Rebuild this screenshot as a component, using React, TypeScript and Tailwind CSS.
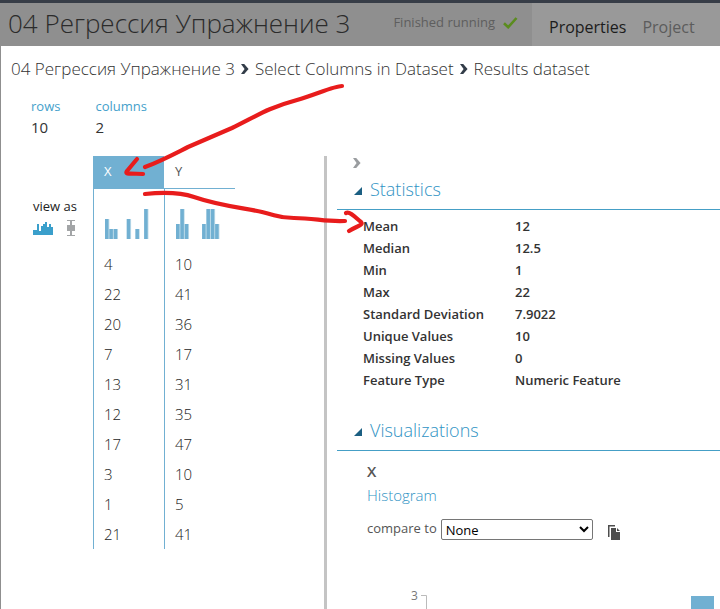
import type { ReactNode } from "react";

const rows: [number, number][] = [
  [4, 10],
  [22, 41],
  [20, 36],
  [7, 17],
  [13, 31],
  [12, 35],
  [17, 47],
  [3, 10],
  [1, 5],
  [21, 41],
];

const stats: [string, string][] = [
  ["Mean", "12"],
  ["Median", "12.5"],
  ["Min", "1"],
  ["Max", "22"],
  ["Standard Deviation", "7.9022"],
  ["Unique Values", "10"],
  ["Missing Values", "0"],
  ["Feature Type", "Numeric Feature"],
];

const xBins = [20, 10, 10, 0, 0, 20, 0, 10, 0, 30];
const yBins = [15, 30, 15, 0, 0, 0, 15, 30, 30, 15];

function Spark({ bins, label }: { bins: number[]; label: string }) {
  const pitch = 4.35;
  return (
    <svg width="44" height="30" viewBox="0 0 44 30" role="img" aria-label={label} className="block">
      {bins.map((h, i) =>
        h ? (
          <g key={i}>
            <rect x={i * pitch} y={30 - h} width={pitch} height={h} fill="#c3deeb" />
            <rect x={i * pitch} y={30 - h} width="3.5" height={h} fill="#71b0d2" />
          </g>
        ) : null
      )}
    </svg>
  );
}

function Chevron({ className }: { className: string }) {
  return (
    <svg width="8" height="10" viewBox="0 0 8 10" className={className} aria-hidden="true">
      <path d="M0 0h3.2L7.6 5 3.2 10H0l3.6-5z" fill="currentColor" />
    </svg>
  );
}

function Section({ title, children }: { title: string; children: ReactNode }) {
  return (
    <section>
      <h2 className="border-b border-[#459fc6] text-lg font-light text-[#2f93c4]">
        <button type="button" className="flex h-[39px] w-full items-center gap-2 pb-px pl-[17px]">
          <svg width="8" height="8" viewBox="0 0 8 8" aria-hidden="true" className="mt-1">
            <path d="M8 0v8H0z" fill="#1b5f82" />
          </svg>
          {title}
        </button>
      </h2>
      {children}
    </section>
  );
}

export default function App() {
  return (
    <div className="relative flex h-screen flex-col overflow-hidden bg-[#8f8f8f] font-['Open_Sans','Noto_Sans',sans-serif] text-[#333]">
      <header className="flex h-[46px] shrink-0 border-t-[3px] border-[#373d47]">
        <div className="flex min-w-0 flex-1 items-center justify-between pr-[14px] pb-1 pl-2">
          <h1 className="text-[26px] leading-8 font-light whitespace-nowrap text-[#2b2b2b]">04 Регрессия Упражнение 3</h1>
          <p className="flex items-center gap-2 text-[13px] whitespace-nowrap text-[#5e5e5e]">
            Finished running
            <svg width="15" height="12" viewBox="0 0 15 12" aria-hidden="true">
              <path d="M1 6.2l4.2 4L13.5 1" fill="none" stroke="#5b8c1e" strokeWidth="2.6" />
            </svg>
          </p>
        </div>
        <nav className="flex w-[188px] items-center gap-4 bg-[#999] pt-1 pl-[17px] text-base">
          <a href="#properties" className="text-[#1c1c1c]">Properties</a>
          <a href="#project" className="text-[#5c5c5c]">Project</a>
        </nav>
      </header>

      <main className="ml-px flex min-h-0 flex-1 flex-col bg-white">
        <nav aria-label="Breadcrumb" className="flex h-[46px] shrink-0 items-center gap-[6px] pl-[10px] text-[17px] font-light whitespace-nowrap text-[#333]">
          <a href="#experiment">04 Регрессия Упражнение 3</a>
          <Chevron className="text-[#333d49]" />
          <a href="#select">Select Columns in Dataset</a>
          <Chevron className="text-[#333d49]" />
          <span>Results dataset</span>
        </nav>

        <dl className="flex h-16 shrink-0 gap-[35px] pt-1 pl-[30px]">
          <div>
            <dt className="text-[13px] leading-5 text-[#459fcb]">rows</dt>
            <dd className="text-[15px] leading-[22px]">10</dd>
          </div>
          <div>
            <dt className="text-[13px] leading-5 text-[#459fcb]">columns</dt>
            <dd className="text-[15px] leading-[22px]">2</dd>
          </div>
        </dl>

        <div className="flex min-h-0 flex-1">
          <div className="flex w-[323px] shrink-0 items-start">
            <div className="w-[92px] pt-10 pl-8">
              <p className="text-[13px] leading-5 whitespace-nowrap text-[#222]">view as</p>
              <div className="mt-1 flex items-center gap-[14px]">
                <button type="button" aria-label="Histogram view">
                  <svg width="20" height="14" viewBox="0 0 20 14" className="block">
                    <path d="M0 14V9h4V3h2v7h2V5h2V3h2V1h2v5h2V3h2v3h2v8z" fill="#3a9fcb" />
                  </svg>
                </button>
                <button type="button" aria-label="Box plot view">
                  <svg width="8" height="16" viewBox="0 0 8 16" className="block">
                    <path d="M0 0h8v1H5v4h3v6H5v4h3v1H0v-1h3v-4H0V5h3V1H0z" fill="#a3a5a7" />
                  </svg>
                </button>
              </div>
            </div>
            <table className="w-[142px] table-fixed border-separate border-spacing-0 text-left">
              <thead>
                <tr className="h-[33px] text-[13px]">
                  <th className="border-b border-l border-[#71b0d2] bg-[#71b0d2] pl-[10px] font-normal text-white">X</th>
                  <th className="border-b border-[#71b0d2] pl-[11px] font-normal text-[#555]">Y</th>
                </tr>
              </thead>
              <tbody className="text-[15px] font-light text-[#1c1c1c]">
                <tr className="h-[60px]">
                  <td className="border-l border-[#71b0d2] pt-[10px] pl-[11px]"><Spark bins={xBins} label="X distribution" /></td>
                  <td className="border-l border-[#71b0d2] pt-[10px] pl-[11px]"><Spark bins={yBins} label="Y distribution" /></td>
                </tr>
                {rows.map(([x, y], i) => (
                  <tr key={i} className="h-[30px]">
                    <td className="border-l border-[#71b0d2] pl-[10px]">{x}</td>
                    <td className="border-l border-[#71b0d2] pl-[10px]">{y}</td>
                  </tr>
                ))}
              </tbody>
            </table>
          </div>
          <div className="w-[3px] shrink-0 bg-[#c4c4c4]" />
          <div className="min-w-0 flex-1 overflow-hidden pl-[10px]">
            <button type="button" aria-label="Collapse panel" className="flex h-[14px] w-10 items-center pl-4">
              <Chevron className="text-[#9a9da0]" />
            </button>
            <Section title="Statistics">
              <table className="mt-[5px] ml-[26px] text-left text-[13px] leading-[22px] font-semibold">
                <tbody>
                  {stats.map(([name, value]) => (
                    <tr key={name}>
                      <th scope="row" className="w-[152px] p-0 font-semibold whitespace-nowrap">{name}</th>
                      <td className="p-0 whitespace-nowrap">{value}</td>
                    </tr>
                  ))}
                </tbody>
              </table>
            </Section>
            <div className="h-5" />
            <Section title="Visualizations">
              <div className="pt-2 pl-[30px]">
                <h3 className="text-[15px] leading-6 font-semibold text-[#555]">X</h3>
                <p className="text-[15px] leading-6 font-light text-[#2f93c4]">Histogram</p>
                <div className="mt-[10px] flex items-center">
                  <label htmlFor="compare" className="mr-1 text-[13px] text-[#555]">compare to</label>
                  <select id="compare" className="h-[21px] w-[152px] rounded-xs border border-[#767676] bg-white text-[13px] leading-4 text-black">
                    <option>None</option>
                  </select>
                  <button type="button" aria-label="Copy" className="mt-2 ml-[15px]">
                    <svg width="14" height="16" viewBox="0 0 14 16" className="block">
                      <path d="M0 0h7v1.500H1.500V12H0z" fill="#4d4d4d" />
                      <path d="M3 3h5v4h4v8H3z M9 3l3 3H9z" fill="#4d4d4d" />
                    </svg>
                  </button>
                </div>
                <svg width="350" height="200" viewBox="0 0 350 200" className="mt-[45px] block max-w-none" role="img" aria-label="Histogram of X">
                  <text x="44" y="14" fontSize="12" fill="#777">3</text>
                  <path d="M54 9.500h5.500V200" fill="none" stroke="#bbb" />
                  <rect x="324" y="10" width="23" height="190" fill="#71b0d2" />
                </svg>
              </div>
            </Section>
          </div>
        </div>
      </main>

      <svg width="720" height="609" viewBox="0 0 720 609" className="pointer-events-none absolute top-0 left-0" aria-hidden="true">
        <g fill="none" stroke="#e81c1c" strokeWidth="4.200" strokeLinecap="round" strokeLinejoin="round">
          <path d="M342 86C334 86 315 95 297 100C267 108 255 117 232 128L188 147C174 154 161 161 145 167" />
          <path d="M137 159L127 171Q125 174 130 173.500L143 174" />
          <path d="M145 194C165 192 182 193 194 197C220 206 245 208 262 212C279 216 278 218 294 218C315 218 325 222 345 221" />
          <path d="M346 213C350 211 356 218 361 222C364 225 357 226 349 231" />
        </g>
      </svg>
    </div>
  );
}
